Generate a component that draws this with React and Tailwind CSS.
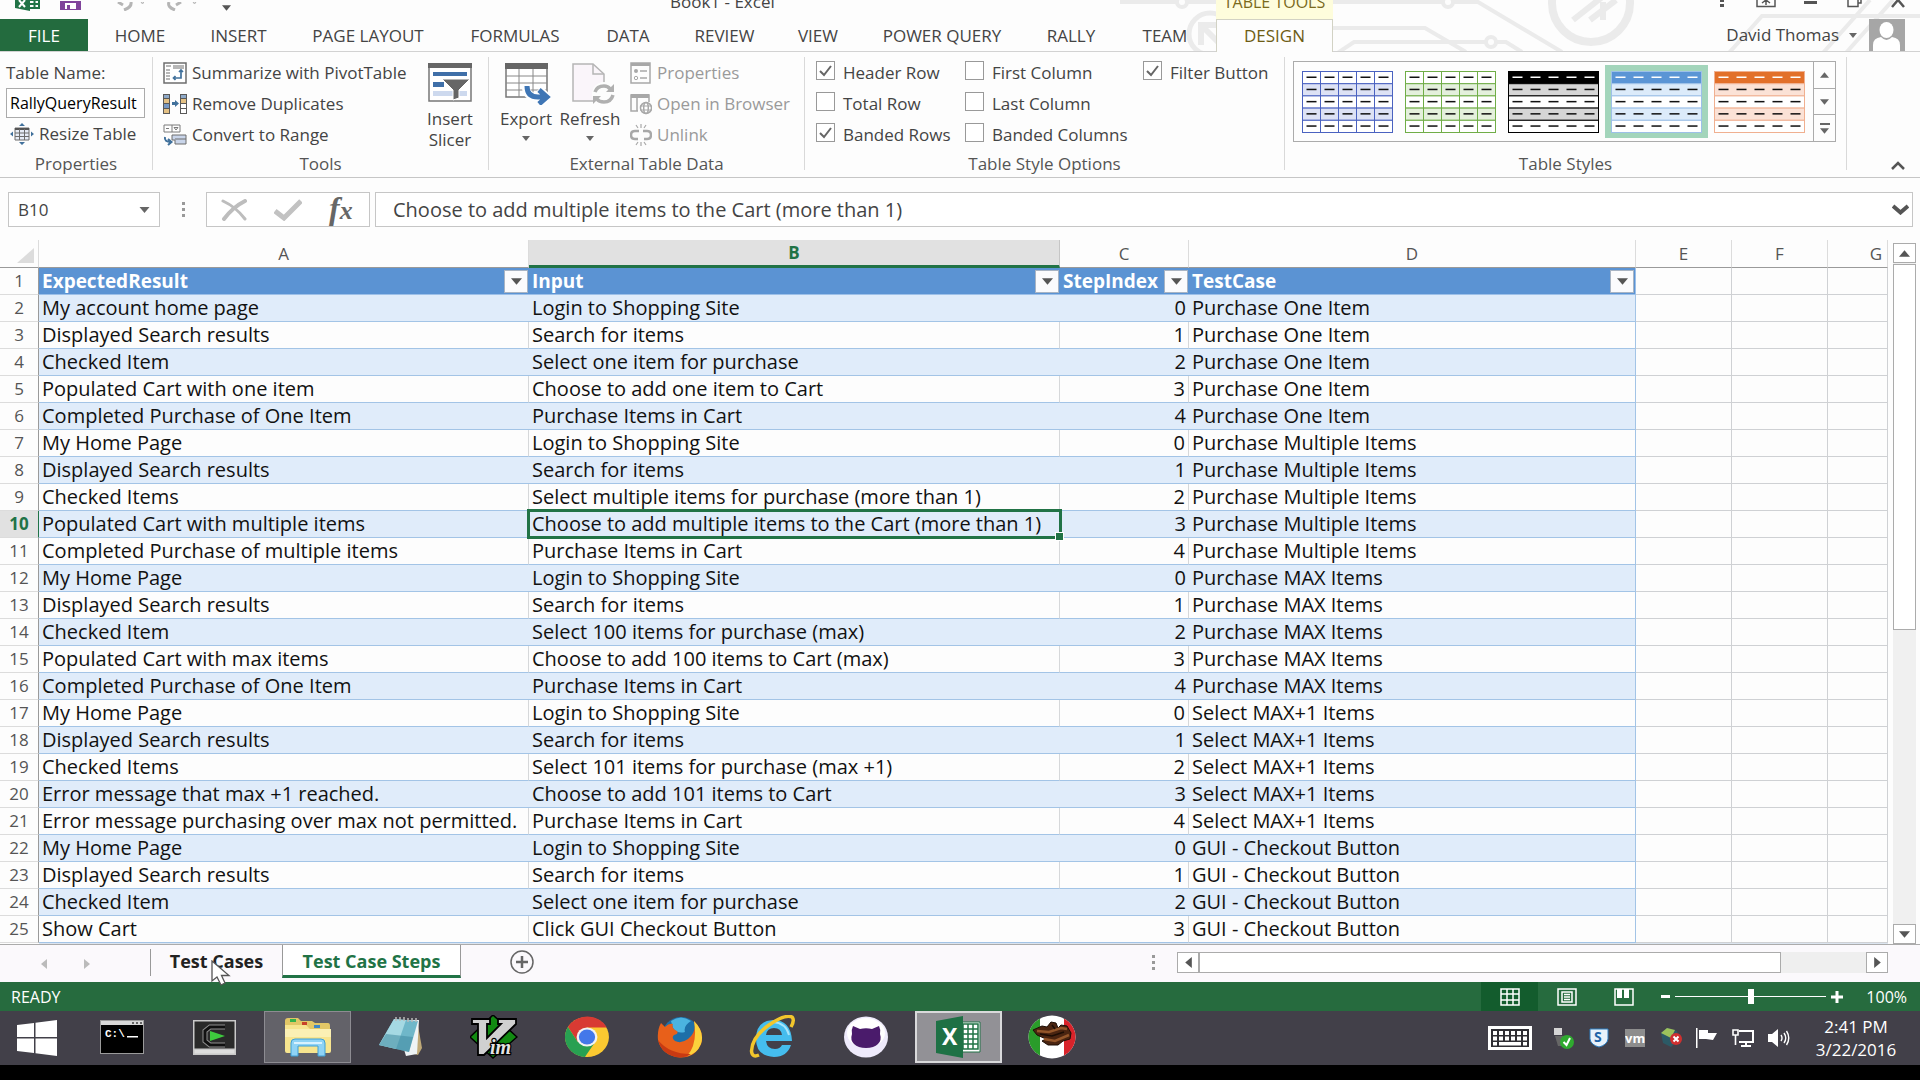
import React from "react";

const TABS = [
  ["HOME", "w-[96px]"],
  ["INSERT", "w-[101px]"],
  ["PAGE LAYOUT", "w-[158px]"],
  ["FORMULAS", "w-[136px]"],
  ["DATA", "w-[90px]"],
  ["REVIEW", "w-[103px]"],
  ["VIEW", "w-[84px]"],
  ["POWER QUERY", "w-[164px]"],
  ["RALLY", "w-[94px]"],
  ["TEAM", "w-[98px] pr-1"],
];

const ROWS = [
  ["My account home page", "Login to Shopping Site", 0, "Purchase One Item"],
  ["Displayed Search results", "Search for items", 1, "Purchase One Item"],
  ["Checked Item", "Select one item for purchase", 2, "Purchase One Item"],
  ["Populated Cart with one item", "Choose to add one item to Cart", 3, "Purchase One Item"],
  ["Completed Purchase of One Item", "Purchase Items in Cart", 4, "Purchase One Item"],
  ["My Home Page", "Login to Shopping Site", 0, "Purchase Multiple Items"],
  ["Displayed Search results", "Search for items", 1, "Purchase Multiple Items"],
  ["Checked Items", "Select multiple items for purchase (more than 1)", 2, "Purchase Multiple Items"],
  ["Populated Cart with multiple items", "Choose to add multiple items to the Cart (more than 1)", 3, "Purchase Multiple Items"],
  ["Completed Purchase of multiple items", "Purchase Items in Cart", 4, "Purchase Multiple Items"],
  ["My Home Page", "Login to Shopping Site", 0, "Purchase MAX Items"],
  ["Displayed Search results", "Search for items", 1, "Purchase MAX Items"],
  ["Checked Item", "Select 100 items for purchase (max)", 2, "Purchase MAX Items"],
  ["Populated Cart with max items", "Choose to add 100 items to Cart (max)", 3, "Purchase MAX Items"],
  ["Completed Purchase of One Item", "Purchase Items in Cart", 4, "Purchase MAX Items"],
  ["My Home Page", "Login to Shopping Site", 0, "Select MAX+1 Items"],
  ["Displayed Search results", "Search for items", 1, "Select MAX+1 Items"],
  ["Checked Items", "Select 101 items for purchase (max +1)", 2, "Select MAX+1 Items"],
  ["Error message that max +1 reached.", "Choose to add 101 items to Cart", 3, "Select MAX+1 Items"],
  ["Error message purchasing over max not permitted.", "Purchase Items in Cart", 4, "Select MAX+1 Items"],
  ["My Home Page", "Login to Shopping Site", 0, "GUI - Checkout Button"],
  ["Displayed Search results", "Search for items", 1, "GUI - Checkout Button"],
  ["Checked Item", "Select one item for purchase", 2, "GUI - Checkout Button"],
  ["Show Cart", "Click GUI Checkout Button", 3, "GUI - Checkout Button"],
];

function Arrow({ dir = "down", className = "h-[6px] w-[10px] text-[#666]" }) {
  const d = { down: "M0 0H10L5 6Z", up: "M0 6H10L5 0Z", left: "M6 0V10L0 5Z", right: "M0 0V10L6 5Z" }[dir];
  const box = dir === "left" || dir === "right" ? "0 0 6 10" : "0 0 10 6";
  return (
    <svg viewBox={box} className={className} fill="currentColor" aria-hidden="true">
      <path d={d} />
    </svg>
  );
}

function Circuit() {
  return (
    <svg viewBox="1100 0 820 52" className="pointer-events-none absolute right-0 top-0 h-[52px] w-[820px]" fill="none" stroke="#ebebeb" strokeWidth="4" aria-hidden="true">
      <path d="M1120 2H1176M1187 2H1443M1453 2H1478L1562 52" />
      <circle cx="1182" cy="2" r="5" />
      <circle cx="1448" cy="2" r="5" />
      <circle cx="1210" cy="34" r="21" strokeWidth="5" />
      <path d="M1201 45V25H1218M1203 27L1220 44" strokeWidth="6" />
      <path d="M1333 28H1425L1466 52M1336 54L1354 42H1486M1496 42H1506L1522 52" />
      <circle cx="1491" cy="42" r="5" />
      <circle cx="1591" cy="3" r="39" strokeWidth="8" />
      <path d="M1573 20L1606 -6M1590 20L1616 0M1603 20V2" strokeWidth="6" />
      <path d="M1728 54L1762 16H1920M1822 54L1870 0M1845 54L1893 0" />
    </svg>
  );
}

function TitleBar() {
  return (
    <div className="relative flex h-[19px] items-end overflow-hidden text-[17px] leading-6">
      <div className="flex w-[670px] shrink-0 items-end self-start">
        <button aria-label="Excel" className="ml-[15px]">
          <svg viewBox="0 0 25 11" className="h-[11px] w-[25px]">
            <path d="M0 0H15V11L0 8Z" fill="#217346" />
            <path d="M4 7L10 0M4 0L10 7" stroke="#fff" strokeWidth="2" />
            <path d="M15 0H24V8H15M15 4H24M19.500 0V8" fill="none" stroke="#217346" strokeWidth="2" />
          </svg>
        </button>
        <button aria-label="Save" className="ml-[20px]">
          <svg viewBox="0 0 21 10" className="h-[10px] w-[21px]">
            <path d="M0 0H21V9H0Z" fill="#80449b" />
            <path d="M5 2H16V8H5Z" fill="#fff" />
            <path d="M7 4H10V9H7Z" fill="#80449b" />
          </svg>
        </button>
        <button aria-label="Undo" className="ml-[33px]">
          <svg viewBox="0 0 30 9" className="h-[9px] w-[30px]" fill="none" stroke="#b5b5b5">
            <path d="M4 0L9 3M17 0Q18 5 10 8" strokeWidth="3" />
            <path d="M27 0H30L28.500 2Z" strokeWidth="1" />
          </svg>
        </button>
        <button aria-label="Redo" className="ml-[22px]">
          <svg viewBox="0 0 36 9" className="h-[9px] w-[36px]" fill="none" stroke="#b5b5b5">
            <path d="M15 0L10 3M3 0Q1 5 9 8" strokeWidth="3" />
            <path d="M27 0H30L28.500 2Z" strokeWidth="1" />
          </svg>
        </button>
        <button aria-label="Customize Quick Access Toolbar" className="ml-[20px]">
          <Arrow className="h-[6px] w-[9px] text-[#555]" />
        </button>
      </div>
      <span className="w-[546px] shrink-0 pb-[5px] text-[#444]">Book1 - Excel</span>
      <span className="flex h-[19px] w-[117px] shrink-0 items-end justify-center bg-[#fefddc] pb-[5px] text-[16px] text-[#7a6a1c]">
        <span className="whitespace-nowrap">TABLE TOOLS</span>
      </span>
      <div className="ml-auto flex self-start text-[#555]">
        <button aria-label="Help" className="flex h-[9px] w-11 justify-center">
          <svg viewBox="0 0 6 8" className="h-[8px] w-[6px]" fill="currentColor"><path d="M1 0H5V2H1ZM1 4H5V7H1Z" /></svg>
        </button>
        <button aria-label="Ribbon Display Options" className="flex h-[9px] w-11 justify-center">
          <svg viewBox="0 0 20 8" className="h-[8px] w-[20px]" fill="none" stroke="currentColor"><path d="M1 0V6.500H19V0M10 5V0M6 3L10 0L14 3" strokeWidth="1.500" /></svg>
        </button>
        <button aria-label="Minimize" className="flex h-[9px] w-11 justify-center">
          <svg viewBox="0 0 13 8" className="h-[8px] w-[13px]" fill="currentColor"><path d="M0 1H13V4H0Z" /></svg>
        </button>
        <button aria-label="Restore" className="flex h-[9px] w-11 justify-center">
          <svg viewBox="0 0 15 8" className="h-[8px] w-[15px]" fill="none" stroke="currentColor"><path d="M1 0V6.500H11V0M11 3H14V0" strokeWidth="1.500" /></svg>
        </button>
        <button aria-label="Close" className="flex h-[9px] w-11 justify-center">
          <svg viewBox="0 0 14 8" className="h-[8px] w-[14px]" fill="none" stroke="currentColor"><path d="M1 7L7 0L13 7" strokeWidth="2.500" /></svg>
        </button>
      </div>
    </div>
  );
}

function TabBar() {
  return (
    <div className="relative flex h-[33px] items-stretch border-b border-[#d2d2d2] text-[17px] text-[#444]">
      <button className="mr-1 w-[88px] shrink-0 bg-[#236b3e] pt-[2px] text-white">FILE</button>
      {TABS.map(([name, width]) => (
        <button key={name} className={`${width} shrink-0 whitespace-nowrap pt-[2px]`}>{name}</button>
      ))}
      <button className="-mb-px w-[117px] shrink-0 border border-b-0 border-[#d2d2c4] bg-[#fdfdfd] text-[#6d5c14]">DESIGN</button>
      <div className="ml-auto flex items-center">
        <button className="flex items-center gap-[10px] whitespace-nowrap">
          David Thomas
          <Arrow className="h-[5px] w-[8px] text-[#666]" />
        </button>
        <svg viewBox="0 0 36 32" className="ml-[12px] mr-[15px] h-8 w-9" role="img" aria-label="Account picture">
          <path d="M0 0H36V32H0Z" fill="#a6a6a6" />
          <ellipse cx="17.500" cy="11" rx="7" ry="8" fill="#fff" />
          <path d="M4 32V26Q4 19 12 18Q17.500 24 23 18Q31 19 31 26V32Z" fill="#fff" />
        </svg>
      </div>
    </div>
  );
}

function Group({ label, className, children }) {
  return (
    <section aria-label={label} className={`${className} flex h-[113px] shrink-0 flex-col border-r border-[#d9d9d9]`}>
      <div className="flex h-[93px] shrink-0">{children}</div>
      <div className="mt-[4px] shrink-0 text-center text-[17px] leading-5 text-[#555]">{label}</div>
    </section>
  );
}

function SmallButton({ icon, children, className = "" }) {
  return (
    <button className={`flex h-[31px] items-center whitespace-nowrap ${className}`}>
      {icon}
      <span className="ml-[5px]">{children}</span>
    </button>
  );
}

const PivotIcon = (
  <svg viewBox="0 0 24 22" className="h-[22px] w-6" fill="none">
    <path d="M1 1H23V21H1Z" fill="#fff" stroke="#6d6d6d" strokeWidth="1.500" />
    <path d="M3 4H8M10 4H21M3 8H7M3 11H7M3 14H7M3 17H7M10 6H21" stroke="#a0a0a0" strokeWidth="1.500" />
    <path d="M18 8V16H11M16 10L18 8L20 10M12.500 14L10.500 16L12.500 18" stroke="#41719c" strokeWidth="1.700" />
  </svg>
);
const DuplicatesIcon = (
  <svg viewBox="0 0 24 20" className="h-5 w-6">
    <path d="M0 0H7V20H0ZM17 0H24V20H17Z" fill="#595959" />
    <path d="M1 1H6V4H1ZM18 1H23V4H18Z" fill="#8ea9c8" />
    <path d="M1 5H6V9H1ZM1 15H6V19H1ZM18 5H23V9H18Z" fill="#e4c184" />
    <path d="M1 10H6V14H1Z" fill="#7698c4" /><path d="M18 10H23V14H18ZM18 15H23V19H18Z" fill="#fff" />
    <path d="M9 8H12V6L16 9.500L12 13V11H9Z" fill="#41719c" />
  </svg>
);
const RangeIcon = (
  <svg viewBox="0 0 24 22" className="h-[22px] w-6" fill="none">
    <path d="M1 1H17V8H1ZM9 1V8" fill="#fff" stroke="#7a7a7a" />
    <path d="M3 4.500H6M11 3.500H15L13 6Z" stroke="#7a7a7a" />
    <path d="M9 11H23V20H12V16H9Z" fill="#c9d5ea" stroke="#6d6d6d" />
    <path d="M12 15H23" stroke="#6d6d6d" />
    <path d="M2 13Q1 18 8 18M5 15L8.500 18L5 21" stroke="#41719c" strokeWidth="2" />
  </svg>
);
const ResizeIcon = (
  <svg viewBox="0 0 24 22" className="h-[22px] w-6" fill="none">
    <path d="M5 5H19V17H5Z" fill="#e6ecf6" stroke="#6d6d6d" />
    <path d="M5 5H19V7H5Z" fill="#555" />
    <path d="M5 10H19M5 13.500H19M9.500 6V17M14.500 6V17" stroke="#6d6d6d" />
    <path d="M12 0L15 3H9ZM12 22L9 19H15ZM0 11L3 8.500V13.500ZM24 11L21 8.500V13.500Z" fill="#41719c" />
  </svg>
);
const PropsIcon = (
  <svg viewBox="0 0 22 22" className="h-[22px] w-[22px]" fill="none">
    <path d="M1 1H20V21H1Z" stroke="#a8a8a8" strokeWidth="1.500" />
    <path d="M1 1H20V4H1Z" fill="#a8a8a8" />
    <circle cx="6" cy="9" r="2" fill="#a8a8a8" /><circle cx="6" cy="16" r="1.700" stroke="#a8a8a8" />
    <path d="M10 9H17M10 16H17" stroke="#a8a8a8" strokeWidth="1.500" />
  </svg>
);
const BrowserIcon = (
  <svg viewBox="0 0 22 22" className="h-[22px] w-[22px]" fill="none" stroke="#a8a8a8" strokeWidth="1.500">
    <path d="M8 18H1V2H19V9M7 4V18" /><path d="M1 1H19V5H1Z" fill="#a8a8a8" stroke="none" />
    <circle cx="16" cy="15" r="5.500" fill="#fff" /><ellipse cx="16" cy="15" rx="2.300" ry="5.500" /><path d="M10 13H22M10 17H22" strokeWidth="1" />
  </svg>
);
const UnlinkIcon = (
  <svg viewBox="0 0 22 22" className="h-[22px] w-[22px]" fill="none" stroke="#a8a8a8">
    <path d="M9 7H5Q1 7 1 11Q1 15 5 15H8M13 7H17Q21 7 21 11Q21 15 17 15H14" strokeWidth="2.500" />
    <path d="M11 0V4M6 1L8 4M16 1L14 4M11 18V22M6 21L8 18M16 21L14 18" strokeWidth="1.200" />
  </svg>
);

function BigButton({ icon, lines, arrow, className }) {
  return (
    <button className={`${className} flex flex-col items-center text-[17px] leading-[21px]`}>
      <span className="mb-[3px] mt-[6px] flex h-[42px] items-start">{icon}</span>
      {lines.map((l) => <span key={l}>{l}</span>)}
      {arrow && <Arrow className="mt-[7px] h-[5px] w-[8px] text-[#666]" />}
    </button>
  );
}

const SlicerIcon = (
  <svg viewBox="0 0 44 40" className="h-10 w-11" fill="none">
    <path d="M1 1H43V38H1Z" fill="#fff" stroke="#777" strokeWidth="1.500" />
    <path d="M0 0H44V5H0Z" fill="#666" />
    <path d="M5 9H39V13H5ZM5 19H16V24H5Z" fill="#3f6fa8" />
    <path d="M5 28H39V33H5Z" fill="#cdd9ee" />
    <path d="M14 16H42L31 27V35L25 37V27Z" fill="#666" stroke="#fff" />
  </svg>
);
const ExportIcon = (
  <svg viewBox="0 0 46 42" className="ml-[3px] h-[42px] w-[46px]" fill="none">
    <path d="M1 1H42V34H1Z" fill="#fff" stroke="#777" strokeWidth="1.500" />
    <path d="M0 0H43V6H0Z" fill="#666" />
    <path d="M1 13H42M1 20H42M1 27H42M14 6V34M28 6V34" stroke="#888" />
    <path d="M21 24Q21 34 33 34H41M34 26L42 34L34 41" stroke="#fff" strokeWidth="8" />
    <path d="M22 23Q22 34 33 34H41M34 27L42 34L34 41" stroke="#3f76b5" strokeWidth="5" />
  </svg>
);
const RefreshIcon = (
  <svg viewBox="0 0 44 42" className="ml-[8px] h-[42px] w-11" fill="none">
    <path d="M1 1H21L32 11V38H1Z" fill="#faf5fa" stroke="#b5b5b5" strokeWidth="1.500" />
    <path d="M21 1V11H32" stroke="#b5b5b5" strokeWidth="1.500" />
    <circle cx="32" cy="31" r="12" fill="#fdfdfd" />
    <path d="M23 29Q25 23 32 23Q36 23 38 26M41 32Q39 39 32 39Q27 39 25 36" stroke="#b0b0b0" strokeWidth="3.500" />
    <path d="M42 21V29H34ZM21 41V33H29Z" fill="#b0b0b0" />
  </svg>
);

function Check({ label, checked }) {
  return (
    <label className="flex h-[31px] items-center whitespace-nowrap">
      <span className="relative mb-1 flex h-[19px] w-[19px] items-center justify-center">
        <input type="checkbox" defaultChecked={checked} className="peer absolute inset-0 h-full w-full appearance-none border border-[#999] bg-white" />
        <svg viewBox="0 0 13 12" className="relative hidden h-3 w-[13px] peer-checked:block" fill="none" stroke="#666" strokeWidth="2"><path d="M1 6L5 10L12 1" /></svg>
      </span>
      <span className="ml-[8px]">{label}</span>
    </label>
  );
}

const STYLES = [
  { name: "Blue grid", line: "#4a62c0", head: "#fff", dash: "#111", band: "#dde2f5", alt: "#fff", grid: true },
  { name: "Green grid", line: "#70ad47", head: "#fff", dash: "#111", band: "#e4f0dc", alt: "#fff", grid: true },
  { name: "Black", line: "#000", head: "#000", dash: "#fff", band: "#d6d6d6", alt: "#fff" },
  { name: "Blue", line: "#9dc0e8", head: "#5b95d5", dash: "#fff", band: "#dcebfa", alt: "#fff", active: true },
  { name: "Orange", line: "#f0b090", head: "#e2702a", dash: "#fff", band: "#fbe2d6", alt: "#fff" },
];

function StyleThumb({ s }) {
  return (
    <button aria-label={s.name} className={`flex h-[73px] w-[103px] items-center justify-center ${s.active ? "bg-[#a3d5bb]" : ""}`}>
      <svg viewBox="0 0 91 62" className="h-[62px] w-[91px]">
        {[0, 1, 2, 3, 4].map((r) => (
          <g key={r}>
            <rect x="0.500" y={r * 12.2 + 0.5} width="90" height="12.200" fill={r === 0 ? s.head : r % 2 ? s.band : s.alt} stroke={s.line} />
            {[0, 1, 2, 3, 4].map((c) => (
              <rect key={c} x={c * 18 + 4.5} y={r * 12.2 + 5.5} width="10" height="1.500" fill={r === 0 ? s.dash : "#111"} />
            ))}
          </g>
        ))}
        {s.grid && <path d="M18.500 0V62M36.500 0V62M54.500 0V62M72.500 0V62" stroke={s.line} />}
      </svg>
    </button>
  );
}

function Ribbon() {
  return (
    <div className="flex h-[126px] border-b border-[#c6c6c6] pt-[5px] text-[17px] text-[#444]">
      <Group label="Properties" className="w-[153px]">
        <div className="flex flex-col items-start pl-[6px]">
          <label htmlFor="tname" className="flex h-[31px] items-center">Table Name:</label>
          <input id="tname" defaultValue="RallyQueryResult" className="h-[30px] w-[139px] border border-[#ababab] bg-white pl-[3px] text-[16px] text-black outline-none" />
          <SmallButton icon={ResizeIcon} className="ml-[4px]">Resize Table</SmallButton>
        </div>
      </Group>
      <Group label="Tools" className="w-[336px]">
        <div className="flex w-[260px] flex-col items-start pl-[10px]">
          <SmallButton icon={PivotIcon}>Summarize with PivotTable</SmallButton>
          <SmallButton icon={DuplicatesIcon}>Remove Duplicates</SmallButton>
          <SmallButton icon={RangeIcon}>Convert to Range</SmallButton>
        </div>
        <BigButton className="w-[74px]" icon={SlicerIcon} lines={["Insert", "Slicer"]} />
      </Group>
      <Group label="External Table Data" className="w-[316px]">
        <BigButton className="ml-[5px] w-[64px]" icon={ExportIcon} lines={["Export"]} arrow />
        <BigButton className="w-[64px]" icon={RefreshIcon} lines={["Refresh"]} arrow />
        <div className="flex flex-col items-start pl-[8px] text-[#9a9a9a]">
          <SmallButton icon={PropsIcon}>Properties</SmallButton>
          <SmallButton icon={BrowserIcon}>Open in Browser</SmallButton>
          <SmallButton icon={UnlinkIcon}>Unlink</SmallButton>
        </div>
      </Group>
      <Group label="Table Style Options" className="w-[480px]">
        <div className="w-[149px] pl-[11px]">
          <Check label="Header Row" checked />
          <Check label="Total Row" />
          <Check label="Banded Rows" checked />
        </div>
        <div className="w-[178px] pl-[11px]">
          <Check label="First Column" />
          <Check label="Last Column" />
          <Check label="Banded Columns" />
        </div>
        <div className="pl-[11px]">
          <Check label="Filter Button" checked />
        </div>
      </Group>
      <Group label="Table Styles" className="w-[562px]">
        <div className="ml-[8px] mt-[4px] flex h-[81px] border border-[#ababab] bg-[#fdfdfd]">
          <div className="flex items-center px-[2px]">
            {STYLES.map((s) => <StyleThumb key={s.name} s={s} />)}
          </div>
          <div className="flex w-[22px] flex-col border-l border-[#ababab]">
            <button aria-label="Previous styles" className="flex flex-1 items-center justify-center border-b border-[#ababab]"><Arrow dir="up" className="h-[6px] w-[9px] text-[#666]" /></button>
            <button aria-label="Next styles" className="flex flex-1 items-center justify-center border-b border-[#ababab]"><Arrow className="h-[6px] w-[9px] text-[#666]" /></button>
            <button aria-label="More styles" className="flex flex-1 flex-col items-center justify-center gap-[3px]">
              <span className="h-[2px] w-[10px] bg-[#666]" />
              <Arrow className="h-[6px] w-[9px] text-[#666]" />
            </button>
          </div>
        </div>
      </Group>
      <button aria-label="Collapse the Ribbon" className="mb-[7px] ml-auto mr-[15px] self-end">
        <svg viewBox="0 0 14 9" className="h-[9px] w-[14px]" fill="none" stroke="#555" strokeWidth="2.500"><path d="M1 8L7 2L13 8" /></svg>
      </button>
    </div>
  );
}

function FormulaBar() {
  return (
    <div className="flex h-[62px] pl-[8px] pr-[7px] pt-[14px] text-[17px] text-[#444]">
      <div className="flex h-[35px] w-[152px] items-center border border-[#c6c6c6] bg-white">
        <input aria-label="Name Box" defaultValue="B10" className="h-full w-[120px] pl-[9px] outline-none" />
        <button aria-label="Name list" className="ml-[10px]"><Arrow className="h-[6px] w-[11px] text-[#666]" /></button>
      </div>
      <svg viewBox="0 0 3 15" className="ml-[22px] mt-[10px] h-[15px] w-[3px]" fill="#999"><path d="M0 0H3V3H0ZM0 6H3V9H0ZM0 12H3V15H0Z" /></svg>
      <div className="ml-[21px] flex h-[35px] w-[164px] items-center border border-[#c6c6c6] bg-white">
        <button aria-label="Cancel" className="ml-[14px]">
          <svg viewBox="0 0 26 22" className="h-[22px] w-[26px]" fill="none" stroke="#bdbdbd" strokeLinecap="round"><path d="M2 2Q15 8 24 20" strokeWidth="3" /><path d="M24 2Q12 8 3 20" strokeWidth="4" /></svg>
        </button>
        <button aria-label="Enter" className="ml-[27px]">
          <svg viewBox="0 0 28 22" className="h-[22px] w-7" fill="none" stroke="#c2c2c2"><path d="M1 12L10 19L27 2" strokeWidth="5" /></svg>
        </button>
        <button aria-label="Insert Function" className="ml-[27px] font-['Liberation_Serif',serif] text-[32px] font-bold italic leading-[30px] text-[#666]">
          f<span className="text-[26px]">x</span>
        </button>
      </div>
      <div className="ml-[5px] flex h-[35px] flex-1 items-center border border-[#c6c6c6] bg-white">
        <input aria-label="Formula Bar" defaultValue="Choose to add multiple items to the Cart (more than 1)" className="h-full flex-1 pl-[17px] text-[20px] outline-none" />
        <button aria-label="Expand Formula Bar" className="mr-[3px]">
          <svg viewBox="0 0 17 11" className="h-[11px] w-[17px]" fill="none" stroke="#555" strokeWidth="4"><path d="M1 2L8.500 8.500L16 2" /></svg>
        </button>
      </div>
    </div>
  );
}

function HeadCell({ children, last }) {
  return (
    <td className={`h-[27px] border-b border-[#9dc0e8] bg-[#5b93d3] p-0 ${last ? "border-r" : ""}`}>
      <div className="flex h-[26px] items-center justify-between pl-[3px] pr-px">
        <span className="text-[19px] font-bold text-white">{children}</span>
        <button aria-label={`Filter ${children}`} className="flex h-[23px] w-6 shrink-0 items-center justify-center border border-[#a8b4c4] bg-[#fbfbfd]">
          <Arrow className="h-[7px] w-[11px] text-[#555]" />
        </button>
      </div>
    </td>
  );
}

function Blank() {
  return (
    <>
      <td className="border-b border-r border-[#cfd1d4] p-0" />
      <td className="border-b border-r border-[#cfd1d4] p-0" />
      <td className="border-b border-r border-[#cfd1d4] p-0" />
    </>
  );
}

function Grid() {
  const colHead = "h-[28px] border-b border-b-[#9a9a9a] border-r border-r-[#dcdcdc] p-0 text-[17px] font-normal leading-[27px]";
  const rowHead = "h-[27px] border-b border-r border-b-[#dcdcdc] border-r-[#9a9a9a] p-0 text-center text-[17px] font-normal leading-[26px] text-[#555]";
  return (
    <table className="w-full table-fixed border-separate border-spacing-0 bg-[#fdfdfd] text-[20px] leading-[26px] text-[#111]">
      <colgroup>
        <col className="w-[39px]" /><col className="w-[490px]" /><col className="w-[531px]" /><col className="w-[129px]" />
        <col className="w-[447px]" /><col className="w-[96px]" /><col className="w-[96px]" /><col />
      </colgroup>
      <thead>
        <tr className="text-[#555]">
          <th className={colHead} aria-label="Select all">
            <svg viewBox="0 0 17 15" className="ml-[17px] mt-[4px] block h-[15px] w-[17px]" fill="#dcdcdc"><path d="M17 0V15H0Z" /></svg>
          </th>
          <th className={colHead}>A</th>
          <th className="h-[28px] border-b-[3px] border-r border-b-[#217346] border-r-[#c6c6c6] bg-[#e1e1e1] p-0 text-[17px] font-bold leading-[25px] text-[#217346]">B</th>
          <th className={colHead}>C</th>
          <th className={colHead}>D</th>
          <th className={colHead}>E</th>
          <th className={colHead}>F</th>
          <th className={`${colHead} pr-[5px] text-right`}>G</th>
        </tr>
      </thead>
      <tbody>
        <tr>
          <th className={rowHead}>1</th>
          <HeadCell>ExpectedResult</HeadCell>
          <HeadCell>Input</HeadCell>
          <HeadCell>StepIndex</HeadCell>
          <HeadCell last>TestCase</HeadCell>
          <Blank />
        </tr>
        {ROWS.map((r, i) => {
          const band = i % 2 === 0;
          const sel = i === 8;
          const cell = band
            ? "h-[27px] whitespace-nowrap border-b border-[#a3c4e6] bg-[#e0ecfa] p-0"
            : "h-[27px] whitespace-nowrap border-b border-r border-b-[#a3c4e6] border-r-[#d6d8da] p-0";
          return (
            <tr key={i}>
              <th className={sel ? "h-[27px] border-b border-r border-b-[#dcdcdc] border-r-[#217346] bg-[#e1e1e1] p-0 text-center text-[17px] font-bold leading-[26px] text-[#217346]" : rowHead}>{i + 2}</th>
              <td className={`${cell} pl-[3px]`}>{r[0]}</td>
              <td className={`${cell} pl-[3px] ${sel ? "relative" : ""}`}>
                {r[1]}
                {sel && (
                  <span className="pointer-events-none absolute -bottom-[2px] -left-[2px] -right-[2px] -top-[2px] border-[3px] border-[#217346]">
                    <span className="absolute -bottom-[5px] -right-[5px] h-[9px] w-[9px] border border-white bg-[#217346]" />
                  </span>
                )}
              </td>
              <td className={`${cell} pr-[3px] text-right`}>{r[2]}</td>
              <td className="h-[27px] whitespace-nowrap border-b border-r border-[#a3c4e6] p-0">
                <div className={band ? "h-[26px] bg-[#e0ecfa] pl-[3px]" : "h-[26px] pl-[3px]"}>{r[3]}</div>
              </td>
              <Blank />
            </tr>
          );
        })}
      </tbody>
    </table>
  );
}

function VScroll() {
  const btn = "flex h-5 shrink-0 items-center justify-center border border-[#ababab] bg-white";
  return (
    <div className="flex w-[32px] shrink-0 flex-col pl-[5px] pr-[4px] pt-[3px]">
      <button aria-label="Scroll up" className={btn}><Arrow dir="up" className="h-[7px] w-[11px] text-[#555]" /></button>
      <div className="flex-1 bg-[#f0f0f0] pt-px">
        <div className="h-[366px] border border-[#ababab] bg-white" />
      </div>
      <button aria-label="Scroll down" className={btn}><Arrow className="h-[7px] w-[11px] text-[#555]" /></button>
    </div>
  );
}

function SheetBar() {
  return (
    <div className="flex h-[37px] bg-[#fbf9fc] text-[18px]">
      <button aria-label="Previous sheet" className="ml-[41px] w-[7px]"><Arrow dir="left" className="h-[10px] w-[6px] text-[#bbb]" /></button>
      <button aria-label="Next sheet" className="ml-[36px] w-[7px]"><Arrow dir="right" className="h-[10px] w-[6px] text-[#bbb]" /></button>
      <div className="ml-[59px] mt-[4px] h-[27px] w-px bg-[#999]" />
      <button className="relative h-[33px] w-[131px] whitespace-nowrap font-bold text-[#222]">
        Test Cases
        <svg viewBox="0 0 20 27" className="absolute left-[60px] top-[15px] h-[27px] w-5">
          <path d="M1 1V21L6 17L10 25L14 23L10.500 15.500H18Z" fill="#fff" stroke="#555" strokeWidth="1.300" />
        </svg>
      </button>
      <button className="h-[33px] w-[179px] whitespace-nowrap border-x border-b-[3px] border-x-[#999] border-b-[#217346] bg-white pt-[2px] font-bold text-[#217346]">Test Case Steps</button>
      <button aria-label="New sheet" className="ml-[49px]">
        <svg viewBox="0 0 24 24" className="mb-[3px] h-6 w-6" fill="none" stroke="#666"><circle cx="12" cy="12" r="11" strokeWidth="1.500" /><path d="M12 6V18M6 12H18" strokeWidth="2.500" /></svg>
      </button>
      <div className="ml-auto flex h-[35px] w-[736px] items-center">
        <svg viewBox="0 0 3 15" className="h-[15px] w-[3px]" fill="#999"><path d="M0 0H3V3H0ZM0 6H3V9H0ZM0 12H3V15H0Z" /></svg>
        <button aria-label="Scroll left" className="ml-[22px] flex h-[21px] w-[22px] items-center justify-center border border-[#ababab] bg-white"><Arrow dir="left" className="h-[11px] w-[7px] text-[#555]" /></button>
        <div className="h-[21px] flex-1 bg-[#efefef]">
          <div className="h-[21px] w-[582px] border border-[#ababab] bg-white" />
        </div>
        <button aria-label="Scroll right" className="flex h-[21px] w-[22px] items-center justify-center border border-[#ababab] bg-white"><Arrow dir="right" className="h-[11px] w-[7px] text-[#555]" /></button>
      </div>
      <div className="w-[32px]" />
    </div>
  );
}

function StatusBar() {
  return (
    <div className="flex h-[29px] items-center bg-[#266b3e] pl-[11px] pr-[13px] text-[16px] text-white">
      <span>READY</span>
      <button aria-label="Normal view" className="ml-auto flex h-full w-[57px] items-center justify-center bg-[#135c2d]">
        <svg viewBox="0 0 20 18" className="h-[18px] w-5" fill="none" stroke="#fff" strokeWidth="1.500"><path d="M1 1H19V17H1ZM1 6H19M1 12H19M7 1V17M13 1V17" /></svg>
      </button>
      <button aria-label="Page layout view" className="flex h-full w-[57px] items-center justify-center">
        <svg viewBox="0 0 20 18" className="h-[18px] w-5" fill="none" stroke="#fff" strokeWidth="1.500"><path d="M1 1H19V17H1ZM5 4H15V14H5ZM7 6.500H13M7 9H13M7 11.500H13" /></svg>
      </button>
      <button aria-label="Page break preview" className="flex h-full w-[57px] items-center justify-center">
        <svg viewBox="0 0 20 18" className="h-[18px] w-5" fill="none" stroke="#fff" strokeWidth="1.500"><path d="M1 1H19V17H1Z" /><path d="M3 1H8V10H3ZM10 1H15V10H10Z" fill="#fff" stroke="none" /></svg>
      </button>
      <button aria-label="Zoom out" className="ml-[8px] flex w-[10px] justify-center"><span className="h-[3px] w-[9px] bg-white" /></button>
      <input
        type="range"
        aria-label="Zoom"
        defaultValue="50"
        className="ml-[5px] h-[15px] w-[151px] appearance-none bg-transparent bg-[linear-gradient(#fff,#fff)] bg-[length:100%_1px] bg-center bg-no-repeat [&::-webkit-slider-thumb]:h-[15px] [&::-webkit-slider-thumb]:w-[6px] [&::-webkit-slider-thumb]:appearance-none [&::-webkit-slider-thumb]:bg-white"
      />
      <button aria-label="Zoom in" className="ml-[5px]">
        <svg viewBox="0 0 12 12" className="h-3 w-3" fill="#fff"><path d="M4.500 0H7.500V4.500H12V7.500H7.500V12H4.500V7.500H0V4.500H4.500Z" /></svg>
      </button>
      <button className="ml-[22px] w-[42px] text-right">100%</button>
    </div>
  );
}

const CmdIcon = (
  <svg viewBox="0 0 44 34" className="h-[34px] w-11">
    <path d="M0 0H44V34H0Z" fill="#9b9b9b" /><path d="M1 5H43V33H1Z" fill="#000" /><path d="M1 1H43V5H1Z" fill="#d8d8d8" />
    <path d="M32 2H34V4H32ZM36 2H38V4H36ZM40 2H42V4H40Z" fill="#666" />
    <text x="5" y="17" fill="#fff" fontFamily="Liberation Mono" fontSize="11" fontWeight="bold">C:\</text><path d="M27 16H38V17.500H27Z" fill="#fff" />
  </svg>
);
const CmderIcon = (
  <svg viewBox="0 0 43 35" className="h-[35px] w-[43px]">
    <path d="M0 0H43V35H0Z" fill="#c9c9c9" /><path d="M1.500 1.500H41.500V28.500H1.500Z" fill="#2a2a2a" /><path d="M1.500 30H41.500V33.500H1.500Z" fill="#dedede" />
    <path d="M32 7H17L12 11V21L17 25H32" fill="none" stroke="#8f8f8f" strokeWidth="5" /><path d="M32 7H17L12 11V21L17 25H32" fill="none" stroke="#111" strokeWidth="3" />
    <path d="M17 11L32 16L17 21Z" fill="#3ec93e" />
  </svg>
);
const ExplorerIcon = (
  <svg viewBox="0 0 48 40" className="h-10 w-12">
    <path d="M1 4Q1 1 4 1H14L17 4H28L31 6H44Q46 6 46 9V34H1Z" fill="#e2c766" />
    <path d="M6 2H12V5H6Z" fill="#37b34a" /><path d="M18 5H23V8H18Z" fill="#c94228" /><path d="M30 8H36V11H30Z" fill="#3f86c4" />
    <path d="M1 8H22L26 12H47V34Q47 36 45 36H3Q1 36 1 34Z" fill="#f7e58f" /><path d="M1 12H47V20H1Z" fill="#fbf0b4" />
    <path d="M7 39V26Q7 22 11 22H37Q41 22 41 26V39H34V29H14V39Z" fill="#8fd3f5" stroke="#3d9fd6" />
    <path d="M10 25H38V27H10Z" fill="#d8f2ff" />
  </svg>
);
const NotepadIcon = (
  <svg viewBox="0 0 46 40" className="h-10 w-[46px]">
    <path d="M39 3L44 31L40 38L33 36Z" fill="#bfa978" /><path d="M17 3H41L39 37L28 39Z" fill="#eef3f5" />
    <path d="M16 2L40 4L31 35L1 28Z" fill="#6fb7c9" /><path d="M16 2L28 3L18 32L1 28Z" fill="#a5d9e3" /><path d="M8 17L35 20L31 35L1 28Z" fill="#3f8ba0" opacity=".55" />
    <path d="M18 0V4M22 0V4M26 0V4M30 1V5M34 1V5M38 1V5" stroke="#bbb" strokeWidth="1.500" />
  </svg>
);
const VimIcon = (
  <svg viewBox="0 0 48 44" className="h-11 w-12">
    <path d="M23 0L47 22L23 43L0 22Z" fill="#118a11" stroke="#000" strokeWidth="1.500" />
    <path d="M2 4H20V9H17V23L31 9H28V4H46V9L14 40H8V9H2Z" fill="#d0d0d0" stroke="#000" strokeWidth="1.800" />
    <text x="20" y="39" fill="#e4e4e4" stroke="#000" strokeWidth="2.500" paintOrder="stroke" fontFamily="Liberation Serif" fontSize="20" fontWeight="bold" fontStyle="italic">im</text>
  </svg>
);
const ChromeIcon = (
  <svg viewBox="0 0 44 44" className="h-[42px] w-[46px]" preserveAspectRatio="none">
    <circle cx="22" cy="22" r="21" fill="#fbc931" />
    <path d="M22 12H41A21 21 0 0 0 3.800 11.500L13 27Z" fill="#d83a33" />
    <path d="M3.800 11.500A21 21 0 0 0 20 43L30 27H13Z" fill="#28a052" />
    <circle cx="22" cy="22" r="10" fill="#f2f2f2" /><circle cx="22" cy="22" r="7.800" fill="#4378ea" />
  </svg>
);
const FirefoxIcon = (
  <svg viewBox="0 0 46 42" className="h-[42px] w-[46px]">
    <ellipse cx="24" cy="20" rx="19" ry="19" fill="#1d6fa8" /><path d="M14 5Q24 -2 34 5Q26 10 28 16Q20 18 16 12Z" fill="#4bb3e0" />
    <path d="M37 5Q48 16 44 28Q38 42 23 41.500Q5 40 1 24Q0 14 4 7L8 11Q12 7 16 8Q14 12 20 15Q22 18 17 19Q14 22 18 25Q24 28 31 23Q40 16 37 5Z" fill="#e8601a" />
    <path d="M37 5Q48 16 44 28Q40 38 30 40Q41 28 37 5Z" fill="#fbd23c" /><path d="M1 24Q5 40 23 41.500Q30 41 34 38Q12 38 1 24Z" fill="#c93a12" />
  </svg>
);
const IeIcon = (
  <svg viewBox="0 0 48 44" className="h-11 w-12">
    <path d="M24 5Q42 5 43 26H17Q18 34 26 34Q31 34 33 30H42Q38 42 25 42Q7 41 7 24Q7 6 24 5ZM17 20H33Q32 13 25 13Q18 13 17 20Z" fill="#45bdee" fillRule="evenodd" />
    <path d="M24 7Q37 8 40 20" fill="none" stroke="#a7e4fb" strokeWidth="2" />
    <path d="M10 40Q3 43 2.500 36Q3 22 20 10Q36 -1 43 2Q46 5 42 12" fill="none" stroke="#f2c62c" strokeWidth="3.500" />
  </svg>
);
const GithubIcon = (
  <svg viewBox="0 0 46 42" className="h-[42px] w-[46px]">
    <ellipse cx="23" cy="21" rx="22" ry="20.500" fill="#eeeafb" /><ellipse cx="23" cy="17" rx="19" ry="15" fill="#fff" />
    <path d="M10 10L17 13Q23 11.500 29 13L36 10Q38 14 37 18Q39 24 35 28Q31 32 23 32Q15 32 11 28Q7 24 9 18Q8 14 10 10Z" fill="#4a1b6b" />
  </svg>
);
const ExcelIcon = (
  <svg viewBox="0 0 45 42" className="h-[42px] w-[45px]">
    <path d="M25 6H44V36H25Z" fill="#fff" stroke="#217346" />
    <path d="M27 8H42V33H27ZM27 13H42M27 18H42M27 23H42M27 28H42M32 8V33M37 8V33" fill="none" stroke="#217346" strokeWidth="1.500" />
    <path d="M0 5L27 0V42L0 37Z" fill="#1e7145" />
    <text x="6" y="29" fill="#fff" fontFamily="Open Sans" fontSize="23" fontWeight="bold">X</text>
  </svg>
);
const ItalyIcon = (
  <svg viewBox="0 0 48 44" className="h-11 w-12">
    <clipPath id="disc"><ellipse cx="24" cy="22" rx="23.500" ry="21.500" /></clipPath>
    <g clipPath="url(#disc)"><path d="M0 0H48V44H0Z" fill="#fff" /><path d="M0 0H12V44H0Z" fill="#2a9c2a" /><path d="M36 0H48V44H36Z" fill="#d8232a" /></g>
    <path d="M5 15L14 11L19 12L23 7L28 8L30 13L33 10L39 11L43 18L42 24L35 26L30 30L20 30L14 26L18 24L9 20Z" fill="#4a2410" stroke="#1c0d05" />
    <path d="M9 16L21 17L33 13L39 14M16 24L27 26L41 20" fill="none" stroke="#94562a" strokeWidth="2.500" />
    <path d="M24 10L27 14M12 19L24 21L36 17" fill="none" stroke="#1c0d05" strokeWidth="1.500" />
  </svg>
);

const TASKS = [
  ["Command Prompt", CmdIcon], ["Cmder", CmderIcon], ["File Explorer", ExplorerIcon, "open"], ["Notepad", NotepadIcon],
  ["Vim", VimIcon], ["Chrome", ChromeIcon], ["Firefox", FirefoxIcon], ["Internet Explorer", IeIcon],
  ["GitHub", GithubIcon], ["Excel", ExcelIcon, "active"], ["Italy", ItalyIcon],
];

const TRAY = [
  ["Safely remove hardware", <svg viewBox="0 0 24 24" className="h-6 w-6"><path d="M3 2H11V9H3Z" fill="#d5d5d5" /><path d="M4 10H14V20H7Z" fill="#666" /><circle cx="16" cy="16" r="7" fill="#2faa2f" /><path d="M12.500 16L15.500 19L19 12" fill="none" stroke="#fff" strokeWidth="2" /></svg>],
  ["Sophos", <svg viewBox="0 0 20 20" className="h-5 w-5"><path d="M1 1H19V11Q18 17 10 19Q2 17 1 11Z" fill="#e8f2fb" stroke="#2d7dc0" /><text x="5" y="14" fill="#1f64a8" fontFamily="Open Sans" fontSize="14" fontWeight="bold">S</text></svg>],
  ["VMware", <svg viewBox="0 0 20 18" className="h-[18px] w-5"><path d="M0 0H20V18H0Z" fill="#8d8d8d" /><text x="0" y="14" fill="#fff" fontFamily="Open Sans" fontSize="13" fontWeight="bold">vm</text></svg>],
  ["Display", <svg viewBox="0 0 24 22" className="h-[22px] w-6"><path d="M2 6L8 1L18 4L20 12L12 20L4 16Z" fill="#2c5a66" /><path d="M2 6L8 1L16 3L12 11Z" fill="#9cc25c" /><circle cx="17" cy="12" r="6" fill="#cf3030" /><path d="M14.500 9.500L19.500 14.500M19.500 9.500L14.500 14.500" stroke="#fff" strokeWidth="2" /></svg>],
  ["Action Center", <svg viewBox="0 0 22 20" className="h-5 w-[22px]" fill="#fff"><path d="M0 0H1.500V20H0ZM3 2H12V5H21L17 12L10 11H3Z" /></svg>],
  ["Network", <svg viewBox="0 0 24 20" className="h-5 w-6" fill="none" stroke="#fff" strokeWidth="2"><path d="M8 3H22V14H8M15 14V18M10 18H20" /><path d="M2 2H7V7H2ZM4.500 7V17" strokeWidth="1.600" /></svg>],
  ["Volume", <svg viewBox="0 0 22 20" className="h-5 w-[22px]" fill="none" stroke="#fff"><path d="M0 6H4L10 1V19L4 14H0Z" fill="#fff" stroke="none" /><path d="M13 7Q15 10 13 13M16 5Q19.500 10 16 15M18.500 3Q23 10 18.500 17" strokeWidth="1.400" /></svg>],
];

function Taskbar() {
  return (
    <div className="flex h-[54px] bg-[#424049] text-white">
      <button aria-label="Start" className="flex w-[78px] items-center pb-px pl-[17px]">
        <svg viewBox="0 0 40 36" className="h-9 w-10" fill="#fff"><path d="M0 5L17 3V17H0ZM18.500 2.700L40 0V17H18.500ZM0 18.500H17V33L0 31ZM18.500 18.500H40V36L18.500 33.300Z" /></svg>
      </button>
      <div className="flex gap-[6px]">
        {TASKS.map(([name, icon, state]) => (
          <button
            key={name}
            aria-label={name}
            className={`mb-[2px] flex w-[87px] items-center justify-center ${state === "open" ? "border border-[#8d8c92] bg-[#636269]" : state === "active" ? "border-2 border-[#d9d9db] bg-[#929196]" : ""}`}
          >
            {icon}
          </button>
        ))}
      </div>
      <div className="ml-auto flex items-center">
        <button aria-label="Touch keyboard" className="mr-[13px]">
          <svg viewBox="0 0 44 24" className="h-6 w-11"><path d="M0 0H44V24H0Z" fill="#fff" /><path d="M3 3H41V21H3Z" fill="#2e2d33" />
            <path d="M5 5H9V9H5ZM11 5H15V9H11ZM17 5H21V9H17ZM23 5H27V9H23ZM29 5H33V9H29ZM35 5H39V9H35ZM5 10.500H9V14.500H5ZM11 10.500H15V14.500H11ZM17 10.500H21V14.500H17ZM23 10.500H27V14.500H23ZM29 10.500H33V14.500H29ZM35 10.500H39V14.500H35ZM5 16H9V19.500H5ZM11 16H33V19.500H11ZM35 16H39V19.500H35Z" fill="#fff" /></svg>
        </button>
        {TRAY.map(([name, icon]) => (
          <button key={name} aria-label={name} className="flex w-9 items-center justify-center">{icon}</button>
        ))}
        <button className="ml-[8px] mr-[13px] w-[102px] text-center text-[17px] leading-[23px]">2:41 PM<br />3/22/2016</button>
      </div>
    </div>
  );
}

export default function App() {
  return (
    <div className="flex min-h-screen flex-col overflow-hidden bg-black font-['Open_Sans','Noto_Sans',sans-serif]">
      <div className="bg-[#fdfdfd]">
        <header className="relative">
          <Circuit />
          <TitleBar />
          <TabBar />
        </header>
        <Ribbon />
        <FormulaBar />
        <main className="flex border-b border-[#ababab]">
          <div className="min-w-0 flex-1">
            <Grid />
            <div className="ml-[39px] h-px bg-[#dbe4ef]" />
          </div>
          <VScroll />
        </main>
        <SheetBar />
        <StatusBar />
      </div>
      <Taskbar />
    </div>
  );
}
